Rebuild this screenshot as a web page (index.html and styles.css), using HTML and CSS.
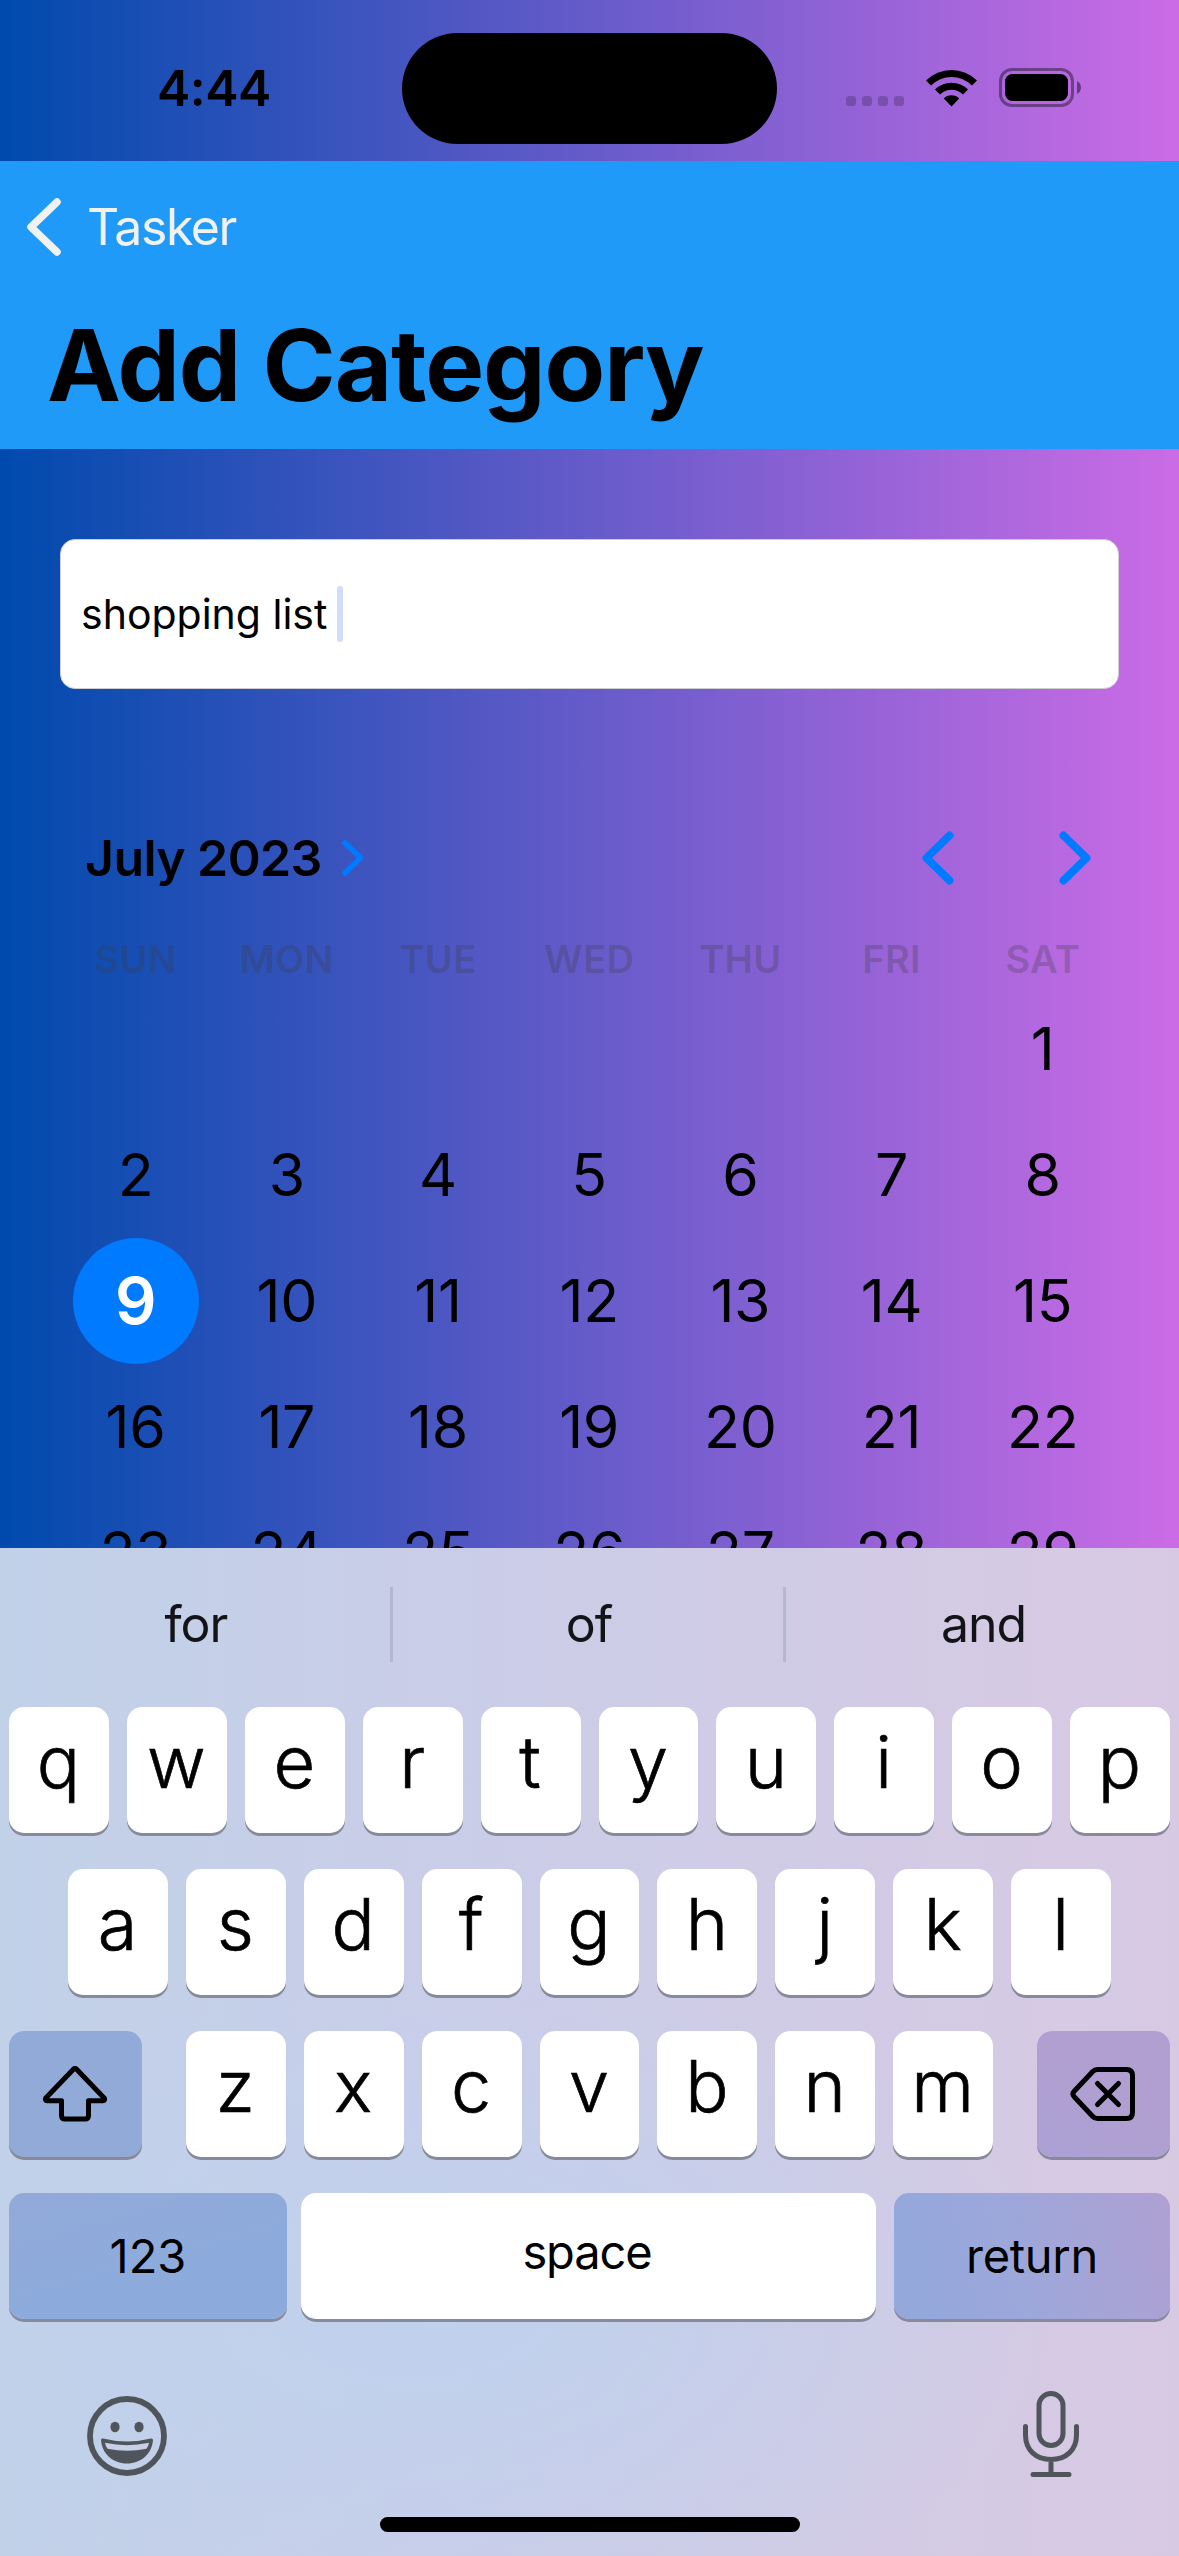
FILE: index.html
```html
<!DOCTYPE html>
<html lang="en">
<head>
<meta charset="utf-8">
<title>Add Category</title>
<link rel="stylesheet" href="styles.css">
</head>
<body>
<div class="screen">
  <div class="status">
    <div class="time">4:44</div>
    <div class="island"></div>
    <div class="indicators">
      <div class="dots"><i></i><i></i><i></i><i></i></div>
      <svg class="wifi" width="51" height="38" viewBox="0 0 51 38"><path d="M0 11.5a36 36 0 0 1 51 0l-5 5a29 29 0 0 0-41 0z"/><path d="M9 20.5a23.4 23.4 0 0 1 33 0l-5 5a16.4 16.4 0 0 0-23 0z"/><path d="M17.8 29.4a11 11 0 0 1 15.4 0l-7.7 8z"/></svg>
      <svg class="battery" width="82" height="39" viewBox="0 0 82 39"><rect x="1.5" y="1.5" width="72" height="36" rx="11.5" fill="none" stroke="#000" stroke-opacity=".4" stroke-width="3"/><rect x="6" y="6" width="63" height="27" rx="7.5"/><path d="M78 13c5.300 2.500 5.300 10.500 0 13z" fill-opacity=".45"/></svg>
    </div>
  </div>

  <header class="navbar">
    <a class="back">
      <svg width="36" height="60" viewBox="0 0 36 60"><path d="M32 5 6 30l26 25" fill="none" stroke="#f1f1f1" stroke-width="7.500" stroke-linecap="round" stroke-linejoin="round"/></svg>
      <span>Tasker</span>
    </a>
    <h1>Add Category</h1>
  </header>

  <main class="content">
    <div class="field"><span>shopping list</span><i class="caret"></i></div>

    <section class="calendar">
      <div class="month-bar">
        <h2>July 2023</h2>
        <svg class="expand" width="22" height="38" viewBox="0 0 22 38"><path d="M3 4l15.500 15L3 34" /></svg>
        <svg class="prev" width="32" height="54" viewBox="0 0 32 54"><path d="M27.500 4.500 4.500 27l23 22.500"/></svg>
        <svg class="next" width="32" height="54" viewBox="0 0 32 54"><path d="M4.500 4.500l23 22.500-23 22.500"/></svg>
      </div>
      <div class="weekdays"><span>SUN</span><span>MON</span><span>TUE</span><span>WED</span><span>THU</span><span>FRI</span><span>SAT</span></div>
      <div class="days">
        <span class="first">1</span>
        <span>2</span><span>3</span><span>4</span><span>5</span><span>6</span><span>7</span><span>8</span>
        <span><b>9</b></span><span>10</span><span>11</span><span>12</span><span>13</span><span>14</span><span>15</span>
        <span>16</span><span>17</span><span>18</span><span>19</span><span>20</span><span>21</span><span>22</span>
        <span>23</span><span>24</span><span>25</span><span>26</span><span>27</span><span>28</span><span>29</span>
      </div>
    </section>
  </main>

  <div class="keyboard">
    <div class="suggestions"><span>for</span><span>of</span><span>and</span></div>
    <div class="keys">
      <div class="row"><kbd>q</kbd><kbd>w</kbd><kbd>e</kbd><kbd>r</kbd><kbd>t</kbd><kbd>y</kbd><kbd>u</kbd><kbd>i</kbd><kbd>o</kbd><kbd>p</kbd></div>
      <div class="row"><kbd>a</kbd><kbd>s</kbd><kbd>d</kbd><kbd>f</kbd><kbd>g</kbd><kbd>h</kbd><kbd>j</kbd><kbd>k</kbd><kbd>l</kbd></div>
      <div class="row">
        <kbd class="fn shift"><svg width="64" height="56" viewBox="0 0 64 56"><path d="M30.400 3.300 3.100 31.700c-1.300 1.500-.7 3 1.200 3H18.500V49.500c0 2.400 1.100 3.500 3.500 3.500H42c2.400 0 3.500-1.100 3.500-3.500V34.700H59.700c1.900 0 2.500-1.500 1.200-3L33.600 3.300c-1-1-2.200-1-3.200 0z"/></svg></kbd>
        <kbd>z</kbd><kbd>x</kbd><kbd>c</kbd><kbd>v</kbd><kbd>b</kbd><kbd>n</kbd><kbd>m</kbd>
        <kbd class="fn delete"><svg width="66" height="56" viewBox="0 0 66 56"><path d="M27.500 3.500H56.500c3.900 0 6 2.100 6 6V46.500c0 3.900-2.100 6-6 6H27.500c-2 0-3.300-.5-4.700-2L4.200 30.800c-1.700-1.900-1.700-3.700 0-5.600L22.800 5.500c1.400-1.500 2.700-2 4.700-2z"/><path d="M27.500 17.500l21 21M48.500 17.500l-21 21"/></svg></kbd>
      </div>
      <div class="row bottom"><kbd class="fn numbers">123</kbd><kbd class="space">space</kbd><kbd class="fn return">return</kbd></div>
    </div>
    <div class="tools">
      <svg class="emoji" width="80" height="80" viewBox="0 0 80 80" fill="#50555c"><circle cx="40" cy="40" r="37" fill="none" stroke="#50555c" stroke-width="5.800"/><ellipse cx="28" cy="31" rx="4.600" ry="5.200"/><ellipse cx="52" cy="31" rx="4.600" ry="5.200"/><path d="M14 44q0-2 2-1.500 24 6 48 0 2-.5 2 1.500C65 58 54 67.500 40 67.500S15 58 14 44z"/><path d="M18 46.800q22 4.800 44 0-.5 3.200-2.500 6-19.500 4-39 0-2-2.800-2.500-6z" fill="#c5d0e9"/></svg>
      <svg width="58" height="88" viewBox="0 0 58 88" fill="none" stroke="#50555c" stroke-width="5" stroke-linecap="round"><rect x="17" y="3.500" width="24" height="52" rx="12"/><path d="M3.500 36.500V45c0 15 10.500 24.500 25.500 24.500S54.500 60 54.500 45V36.500M29 70v14M11 84.500H47"/></svg>
    </div>
    <div class="home"></div>
  </div>
</div>
</body>
</html>
```

FILE: styles.css
```css
* { box-sizing: border-box; }

body {
  margin: 0;
  font-family: Inter, "Liberation Sans", sans-serif;
  color: #000;
}

.screen {
  width: 1179px;
  height: 2556px;
  display: flex;
  flex-direction: column;
  overflow: hidden;
  background: linear-gradient(90deg, #004aad, #cb6ce6);
}

svg { display: block; flex: none; }
h1, h2 { margin: 0; }

/* status bar */
.status {
  height: 161px;
  flex: none;
  display: grid;
  grid-template-columns: 402px 375px 402px;
  padding-top: 33px;
  align-items: start;
}
.time {
  height: 111px;
  line-height: 111px;
  padding-left: 157px;
  font-size: 50px;
  font-weight: 600;
  letter-spacing: -.5px;
}
.island {
  height: 111px;
  border-radius: 56px;
  background: #000;
}
.indicators {
  display: flex;
  align-items: flex-end;
  padding: 35px 0 0 69px;
}
.dots { display: flex; gap: 6px; padding-bottom: 1px; margin-right: 22px; }
.dots i { width: 10px; height: 10px; border-radius: 3px; background: rgba(0, 0, 0, .2); }
.wifi { margin-right: 22px; }

/* navigation bar */
.navbar {
  height: 288px;
  flex: none;
  background: #1f9af8;
}
.back {
  height: 132px;
  padding-left: 25px;
  display: flex;
  align-items: center;
  gap: 26px;
  font-size: 50px;
  letter-spacing: -1.400px;
  color: #f1f1f1;
}
h1 {
  padding-left: 47px;
  font-size: 99px;
  line-height: 144px;
  font-weight: 700;
  letter-spacing: -1.100px;
}

/* form */
.content {
  height: 1099px;
  flex: none;
  padding: 90px 60px 0;
  overflow: hidden;
}
.field {
  height: 150px;
  padding-left: 20px;
  display: flex;
  align-items: center;
  border: 1px solid #cdcdd2;
  border-radius: 15px;
  background: #fff;
  font-size: 41px;
}
.caret {
  width: 6px;
  height: 56px;
  margin-left: 10px;
  border-radius: 3px;
  background: #d1dbfb;
}

/* calendar */
.calendar { padding-top: 109px; }
.month-bar {
  height: 120px;
  padding: 0 28px 0 25px;
  display: flex;
  align-items: center;
  fill: none;
  stroke: #007aff;
  stroke-width: 8;
  stroke-linecap: round;
  stroke-linejoin: round;
}
h2 { font-size: 50px; font-weight: 600; letter-spacing: -.6px; }
.expand { margin-left: 20px; stroke-width: 5.500; }
.prev { margin-left: auto; }
.next { margin-left: 105px; }

.weekdays, .days {
  display: grid;
  grid-template-columns: repeat(7, 151.200px);
  text-align: center;
}
.weekdays {
  height: 68px;
  line-height: 83px;
  font-size: 38px;
  font-weight: 600;
  letter-spacing: .3px;
  color: rgba(60, 60, 67, .3);
}
.days {
  grid-auto-rows: 126px;
  line-height: 126px;
  font-size: 59px;
  letter-spacing: -.3px;
}
.first { grid-column: 7; }
.days b {
  display: block;
  width: 126px;
  height: 126px;
  margin: 0 auto;
  border-radius: 50%;
  background: #007aff;
  color: #fff;
  font-size: 65px;
  font-weight: 600;
}

/* keyboard */
.keyboard {
  flex: 1;
  display: flex;
  flex-direction: column;
  background:
    radial-gradient(ellipse 620px 330px at 440px 760px, #bfd1ed 0%, rgba(191, 209, 237, 0) 100%),
    linear-gradient(90deg, #c1d1e8 0%, #cbcde8 42%, #d1cbe5 70%, #d8c9e3 100%);
}
.suggestions {
  height: 159px;
  padding-top: 39px;
  display: grid;
  grid-template-columns: 390px 393px 396px;
  text-align: center;
  font-size: 50px;
  line-height: 75px;
  color: #131417;
}
.suggestions span { height: 75px; padding-left: 2px; letter-spacing: -1px; }
.suggestions span + span { border-left: 3px solid #b5b7d2; }

.keys { display: flex; flex-direction: column; gap: 36px; }
.row { display: flex; justify-content: center; gap: 18px; }
kbd {
  width: 99.900px;
  height: 126px;
  flex: none;
  display: flex;
  align-items: center;
  justify-content: center;
  padding-bottom: 17px;
  border-radius: 15px;
  background: #fff;
  box-shadow: 0 3px 0 #868a9b;
  font-family: inherit;
  font-size: 72px;
  font-weight: 300;
  -webkit-text-stroke: .7px #000;
}
.row:not(.bottom) kbd:not(.fn) { padding-right: 1px; }
.fn {
  width: 133px;
  padding-bottom: 0;
  fill: none;
  stroke: #000;
  stroke-width: 5;
  stroke-linecap: round;
  stroke-linejoin: round;
}
.shift { margin-right: 25.500px; padding-right: 2px; background: #92aad7; }
.delete { margin-left: 25.500px; background: linear-gradient(30deg, #aaa1d5, #b19fd1 50%); }
.bottom { padding: 0 9px; justify-content: space-between; gap: 0; }
.numbers, .space, .return { font-size: 47px; font-weight: 400; -webkit-text-stroke: 0; }
.numbers { width: 278px; padding-bottom: 1px; background: linear-gradient(165deg, #93aad9, #8cabdc 60%); }
.space { width: 575px; margin-right: 4px; padding: 0 3px 9px 0; letter-spacing: -1.100px; }
.return { width: 276px; padding-bottom: 1px; letter-spacing: -.3px; background: linear-gradient(75deg, #94a8dc 10%, #9da7da 45%, #afa0d2); }

.tools {
  display: flex;
  justify-content: space-between;
  align-items: center;
  padding: 71px 99px 0 87px;
}
.emoji { margin-top: 3px; }
.home {
  width: 420px;
  height: 15px;
  margin: 39px auto 0;
  border-radius: 8px;
  background: #000;
}
```
